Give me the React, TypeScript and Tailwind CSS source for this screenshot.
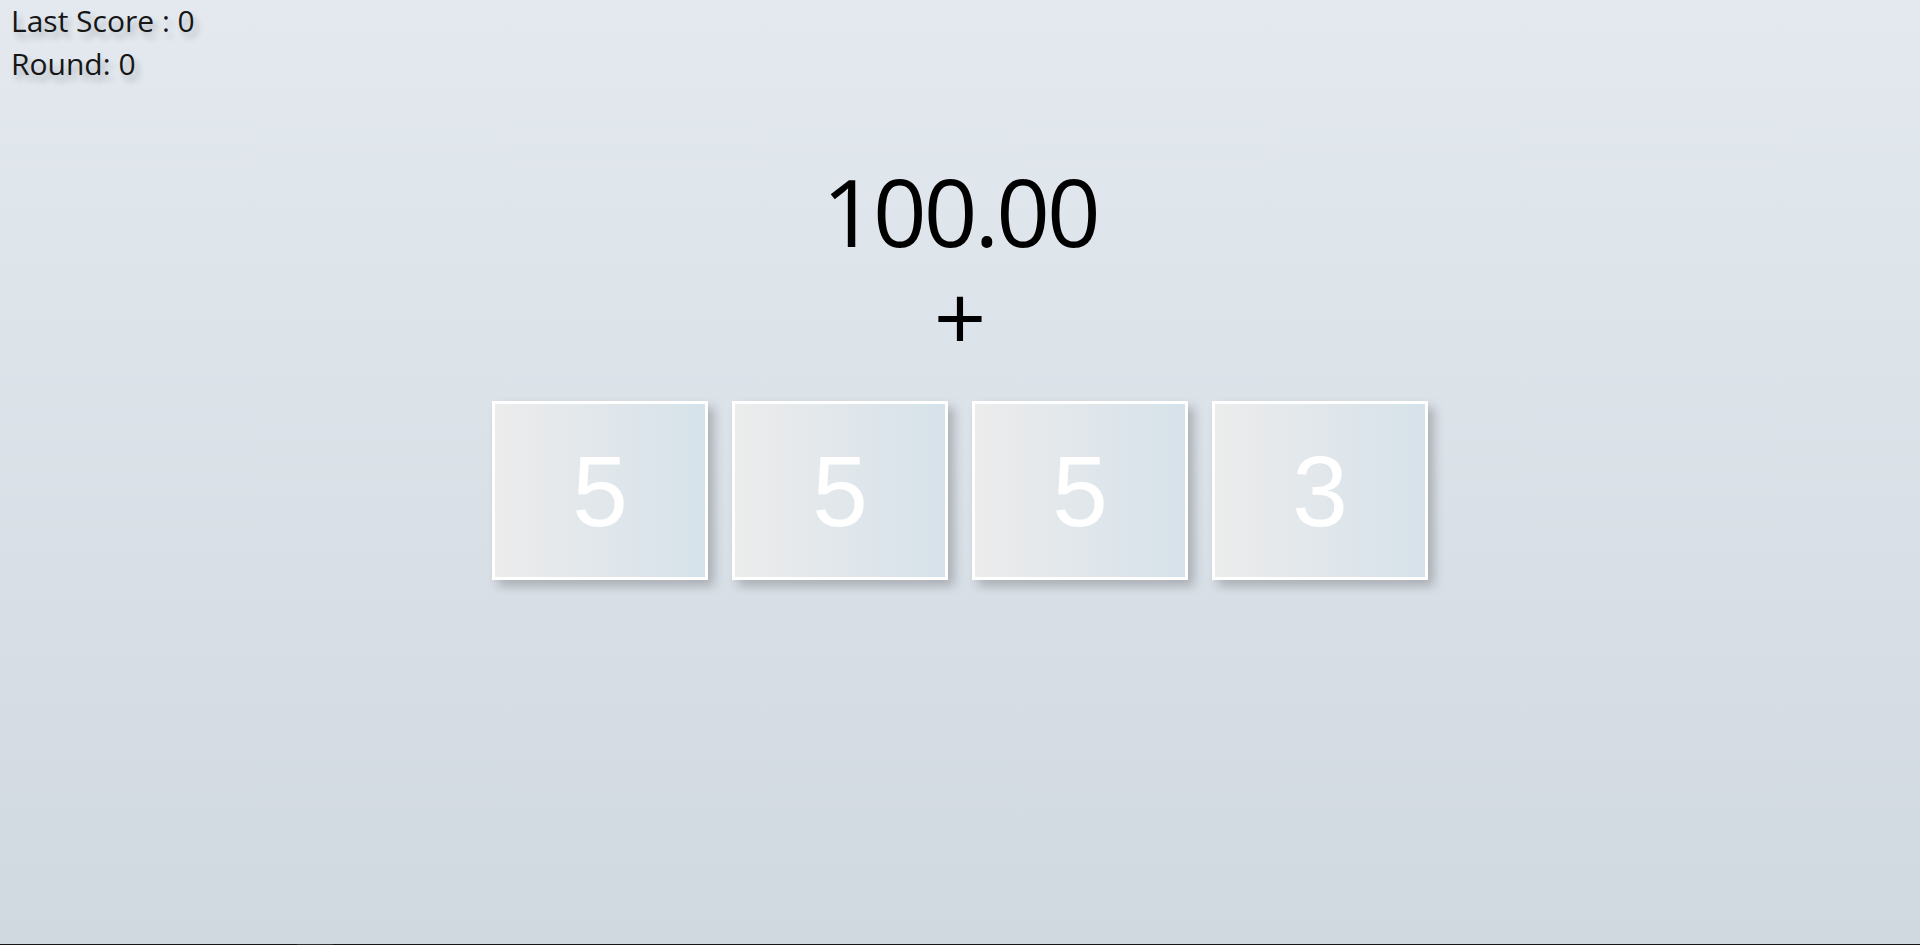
import React from "react";

const cards = [5, 5, 5, 3];

export default function App() {
  return (
    <div
      className="w-full h-[945px] flex flex-col bg-gradient-to-b from-[#e3e9ef] to-[#d1d9e0] overflow-hidden"
      style={{ fontFamily: '"Open Sans", "Noto Sans", sans-serif' }}
    >
      <div className="pl-[11px] -mt-[1px] text-[30px] leading-[43px] text-[#161616] [text-shadow:4px_6px_6px_rgba(0,0,0,0.22)]">
        <div>Last Score : 0</div>
        <div>Round: 0</div>
      </div>
      <div className="flex flex-col items-center">
        <div className="mt-[79px] text-[94px] leading-[1] tracking-[-3px] text-black">100.00</div>
        <div className="mt-[12px] text-[92px] leading-[1] text-black">+</div>
        <div className="mt-[39px] flex gap-[24px]">
          {cards.map((n, i) => (
            <div
              key={i}
              className="w-[216px] h-[179px] border-[3px] border-white bg-gradient-to-r from-[#ececec] to-[#d6e2ea] shadow-[6px_6px_10px_rgba(0,0,0,0.22)] flex items-center justify-center text-white text-[100px]"
              style={{ fontFamily: '"Liberation Sans", Arial, sans-serif' }}
            >
              {n}
            </div>
          ))}
        </div>
      </div>
      <div className="mt-auto h-px w-full bg-[#121518] flex">
        <div className="ml-[297px] w-[36px] h-px bg-[#2c2f33]" />
      </div>
    </div>
  );
}
